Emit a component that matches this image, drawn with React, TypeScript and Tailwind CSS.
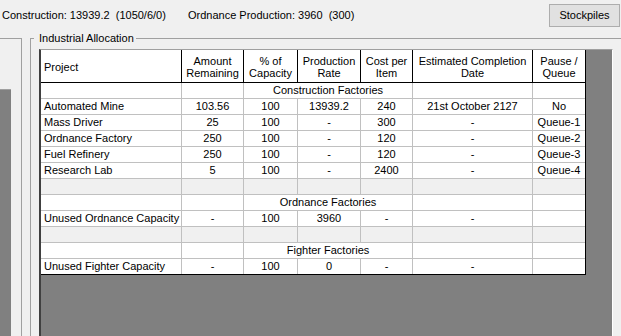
import React from 'react';

type Col = { w: string; head: string[]; left?: boolean };

type Row =
  | { kind: 'section'; title: string }
  | { kind: 'blank' }
  | { kind: 'data'; cells: string[] };

const COLS: Col[] = [
  { w: 'w-[141px]', head: ['Project'], left: true },
  { w: 'w-[62px]', head: ['Amount', 'Remaining'] },
  { w: 'w-[54px]', head: ['% of', 'Capacity'] },
  { w: 'w-[63px]', head: ['Production', 'Rate'] },
  { w: 'w-[52px]', head: ['Cost per', 'Item'] },
  { w: 'w-[120px]', head: ['Estimated Completion', 'Date'] },
  { w: 'w-[52px]', head: ['Pause /', 'Queue'] },
];

const ROWS: Row[] = [
  { kind: 'section', title: 'Construction Factories' },
  { kind: 'data', cells: ['Automated Mine', '103.56', '100', '13939.2', '240', '21st October 2127', 'No'] },
  { kind: 'data', cells: ['Mass Driver', '25', '100', '-', '300', '-', 'Queue-1'] },
  { kind: 'data', cells: ['Ordnance Factory', '250', '100', '-', '120', '-', 'Queue-2'] },
  { kind: 'data', cells: ['Fuel Refinery', '250', '100', '-', '120', '-', 'Queue-3'] },
  { kind: 'data', cells: ['Research Lab', '5', '100', '-', '2400', '-', 'Queue-4'] },
  { kind: 'blank' },
  { kind: 'section', title: 'Ordnance Factories' },
  { kind: 'data', cells: ['Unused Ordnance Capacity', '-', '100', '3960', '-', '-', ''] },
  { kind: 'blank' },
  { kind: 'section', title: 'Fighter Factories' },
  { kind: 'data', cells: ['Unused Fighter Capacity', '-', '100', '0', '-', '-', ''] },
];

function HeaderRow() {
  return (
    <div className="flex h-[33px] border-b border-black bg-white">
      {COLS.map((c, i) => (
        <div
          key={i}
          className={`${c.w} shrink-0 flex flex-col justify-center pt-[2px] leading-[12px] ${
            i < COLS.length - 1 ? 'border-r border-black' : ''
          } ${c.left ? 'items-start pl-[3px]' : 'items-center text-center'}`}
        >
          {c.head.map(h => (
            <span key={h} className="whitespace-nowrap">{h}</span>
          ))}
        </div>
      ))}
    </div>
  );
}

function BodyRow({ row, last }: { row: Row; last: boolean }) {
  const rowCls = `flex h-[16px] border-b ${last ? 'border-black' : 'border-[#c0c0c0]'} ${
    row.kind === 'blank' ? 'bg-[#f0f0f0]' : 'bg-white'
  }`;

  if (row.kind === 'section') {
    return (
      <div className={rowCls}>
        <div className="w-[141px] shrink-0 border-r border-[#c0c0c0]" />
        <div className="w-[62px] shrink-0 border-r border-[#c0c0c0]" />
        <div className="w-[169px] shrink-0 border-r border-[#c0c0c0] flex items-center justify-center leading-[15px] whitespace-nowrap">
          {row.title}
        </div>
        <div className="w-[120px] shrink-0 border-r border-[#c0c0c0]" />
        <div className="w-[52px] shrink-0" />
      </div>
    );
  }

  return (
    <div className={rowCls}>
      {COLS.map((c, i) => (
        <div
          key={i}
          className={`${c.w} shrink-0 flex items-center leading-[15px] whitespace-nowrap ${
            i < COLS.length - 1 ? 'border-r border-[#c0c0c0]' : ''
          } ${c.left ? 'justify-start pl-[3px]' : 'justify-center'}`}
        >
          {row.kind === 'data' ? row.cells[i] : ''}
        </div>
      ))}
    </div>
  );
}

export default function App() {
  return (
    <div className="w-[621px] h-[336px] overflow-hidden bg-[#f0f0f0] text-black text-[11px] font-['Liberation_Sans',Arial,sans-serif] flex flex-col">
      {/* top summary bar */}
      <div className="flex items-center h-[34px] pt-[4px] pb-[7px] shrink-0">
        <span className="w-[188px] pl-[2px] whitespace-pre shrink-0">Construction: 13939.2  (1050/6/0)</span>
        <span className="whitespace-pre">Ordnance Production: 3960  (300)</span>
        <button className="ml-auto mr-[1px] w-[71px] h-[23px] bg-[#e1e1e1] border border-[#adadad] leading-[21px] text-center">
          Stockpiles
        </button>
      </div>

      <div className="h-[4px] shrink-0" />

      <div className="flex flex-1 min-h-0">
        {/* left panel (cut off) */}
        <div className="w-[22px] shrink-0 border-t border-r border-[#a0a0a0] flex flex-col">
          <div className="h-[50px] shrink-0" />
          <div className="w-[11px] flex-1 bg-[#808080] border-t border-[#a0a0a0]" />
        </div>

        <div className="w-[8px] shrink-0" />

        {/* Industrial Allocation group box */}
        <div className="relative flex-1 border-t border-l border-[#a0a0a0] pl-[8px] pt-[10px] flex flex-col">
          <span className="absolute left-[3px] top-[-7px] pl-[5px] pr-[2px] leading-[13px] bg-[#f0f0f0] whitespace-nowrap">
            Industrial Allocation
          </span>

          <div className="w-[574px] flex-1 bg-[#808080] border-l-2 border-l-[#404040] border-t border-t-[#a0a0a0] border-r border-r-white">
            <div className="w-[545px] border-r border-black">
              <HeaderRow />
              {ROWS.map((r, i) => (
                <BodyRow key={i} row={r} last={i === ROWS.length - 1} />
              ))}
            </div>
          </div>
        </div>
      </div>
    </div>
  );
}
